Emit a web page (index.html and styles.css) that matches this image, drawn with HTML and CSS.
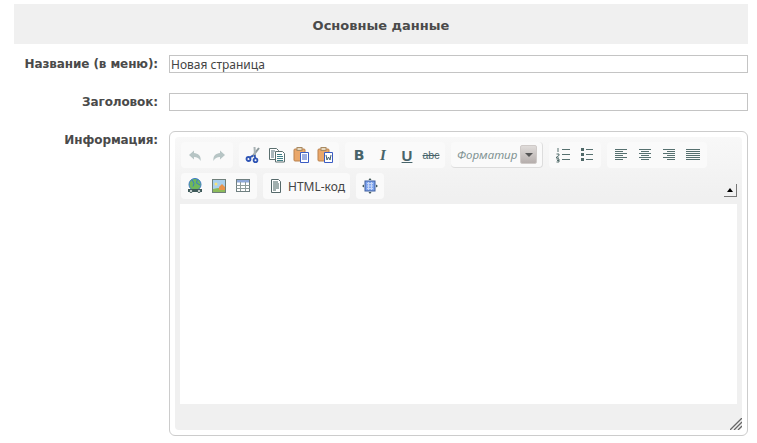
FILE: index.html
```html
<!DOCTYPE html>
<html lang="en">
<head>
    <meta charset="UTF-8">
    <title>Основные данные</title>
    <link rel="stylesheet" href="styles.css">
</head>
<body>
    <div class="container">
        <h2 class="section-title">Основные данные</h2>

        <div class="row">
            <label class="row-label">Название (в меню):</label>
            <input class="text-input" type="text" value="Новая страница">
        </div>
        <div class="row">
            <label class="row-label">Заголовок:</label>
            <input class="text-input" type="text">
        </div>
        <div class="row">
            <label class="row-label">Информация:</label>
            <div class="editor">
                <div class="editor-inner">
                    <div class="toolbar">
                        <div class="tb-group">
                            <span class="tb-btn"><svg width="16" height="16" viewBox="0 0 16 16"><path d="M7 3.500 2 8l5 4.500V10c3 0 5 1 6.500 4C14.500 9 11 6.200 7 6z" fill="#b7c5c5"/></svg></span>
                            <span class="tb-btn"><svg width="16" height="16" viewBox="0 0 16 16"><path d="M9 3.500 14 8l-5 4.500V10c-3 0-5 1-6.500 4C1.500 9 5 6.200 9 6z" fill="#b7c5c5"/></svg></span>
                        </div>
                        <div class="tb-group">
                            <span class="tb-btn"><svg width="16" height="16" viewBox="0 0 16 16"><path d="M14 1 7 10" stroke="#8d9a9c" stroke-width="2" fill="none"/><path d="M9.500 0 10 9" stroke="#a9b3b5" stroke-width="2" fill="none"/><path d="M8 8.500 4 11M9.500 8l1 4" stroke="#2f55b5" stroke-width="1.800" fill="none"/><circle cx="3.500" cy="12" r="2" fill="none" stroke="#2f55b5" stroke-width="1.800"/><circle cx="10.500" cy="13.200" r="1.900" fill="none" stroke="#2f55b5" stroke-width="1.800"/></svg></span>
                            <span class="tb-btn"><svg width="16" height="16" viewBox="0 0 16 16"><path d="M.5 1.500h7l2 2v9h-9z" fill="#fff" stroke="#5b6f6f"/><path d="M6.500 4.500h7l2 2v8.500h-9z" fill="#fff" stroke="#5b6f6f"/><path d="M2 4h4M2 6h3M2 8h3M2 10h3" stroke="#55707a"/><path d="M8 7.500h5M8 9.500h6M8 11.500h6M8 13.500h6" stroke="#3f7f86"/></svg></span>
                            <span class="tb-btn"><svg width="16" height="16" viewBox="0 0 16 16"><rect x="1" y="2" width="11" height="12" rx="1" fill="#eaa76a" stroke="#b9824f"/><rect x="4" y="0.500" width="5" height="3" fill="#e7d9c0" stroke="#a98a62"/><path d="M7.500 5.500h8v10h-8z" fill="#fff" stroke="#3a5cc4"/><path d="M9 8h5M9 10h5M9 12h5" stroke="#3a5cc4"/></svg></span>
                            <span class="tb-btn"><svg width="16" height="16" viewBox="0 0 16 16"><rect x="1" y="2" width="11" height="12" rx="1" fill="#eaa76a" stroke="#b9824f"/><rect x="4" y="0.500" width="5" height="3" fill="#e7d9c0" stroke="#a98a62"/><path d="M7.500 5.500h8v10h-8z" fill="#fff" stroke="#3a5cc4"/><path d="M9 8l1 5 1.500-3 1.500 3 1-5" stroke="#44606e" fill="none"/></svg></span>
                        </div>
                        <div class="tb-group">
                            <span class="tb-btn tb-bold">B</span>
                            <span class="tb-btn tb-italic">I</span>
                            <span class="tb-btn tb-under">U</span>
                            <span class="tb-btn tb-strike">abc</span>
                        </div>
                        <div class="tb-group tb-format">
                            <span class="format-text">Форматир</span>
                            <span class="format-arrow"></span>
                        </div>
                        <div class="tb-group">
                            <span class="tb-btn"><svg width="16" height="16" viewBox="0 0 16 16"><path d="M7 2.500h8M7 7.500h8M7 12.500h8" stroke="#56706f" fill="none"/><path d="M3 1v4M1.500 7H4v1.500L1.500 10v1H4M1.500 12H4v3H1.500M2 13.500h2" stroke="#44605f" stroke-width=".900" fill="none"/></svg></span>
                            <span class="tb-btn"><svg width="16" height="16" viewBox="0 0 16 16"><path d="M7 2.500h7M7 7.500h7M7 12.500h7" stroke="#56706f" fill="none"/><path d="M2 1h3v3H2zM2 6h3v3H2zM2 11h3v3H2z" fill="#4f6868"/></svg></span>
                        </div>
                        <div class="tb-group">
                            <span class="tb-btn"><svg width="16" height="16" viewBox="0 0 16 16"><path d="M2 2.500h12M2 4.500h8M2 6.500h12M2 8.500h8M2 10.500h12M2 12.500h8" stroke="#56706f"/></svg></span>
                            <span class="tb-btn"><svg width="16" height="16" viewBox="0 0 16 16"><path d="M2 2.500h12M4 4.500h8M2 6.500h12M4 8.500h8M2 10.500h12M4 12.500h8" stroke="#56706f"/></svg></span>
                            <span class="tb-btn"><svg width="16" height="16" viewBox="0 0 16 16"><path d="M2 2.500h12M6 4.500h8M2 6.500h12M6 8.500h8M2 10.500h12M6 12.500h8" stroke="#56706f"/></svg></span>
                            <span class="tb-btn"><svg width="16" height="16" viewBox="0 0 16 16"><path d="M1 2.500h14M1 4.500h14M1 6.500h14M1 8.500h14M1 10.500h14M1 12.500h14" stroke="#56706f"/></svg></span>
                        </div>
                    </div>
                    <div class="toolbar toolbar-second">
                        <div class="tb-group">
                            <span class="tb-btn"><svg width="16" height="16" viewBox="0 0 16 16"><circle cx="8" cy="6.500" r="6" fill="#6fb85a" stroke="#3a78c8"/><path d="M5 1.500l2 4-1 3M10.500 1l-1 4 3.500 2" stroke="#3a78c8" fill="none"/><path d="M1 11h14v3H1z" fill="#3f5a5a"/><circle cx="4" cy="13" r="1.500" fill="#fff" stroke="#3f5a5a"/><circle cx="12" cy="13" r="1.500" fill="#fff" stroke="#3f5a5a"/></svg></span>
                            <span class="tb-btn"><svg width="16" height="16" viewBox="0 0 16 16"><rect x="1.500" y="1.500" width="13" height="13" fill="#a9d0ee" stroke="#6f7f7a"/><path d="M2 14v-3l5-1 7 1v3z" fill="#8cbb5a"/><path d="M8 9l3-3 3 3v3H8z" fill="#e8924a"/><circle cx="5" cy="6" r="1.500" fill="#f5e27a"/></svg></span>
                            <span class="tb-btn"><svg width="16" height="16" viewBox="0 0 16 16"><rect x="1.500" y="1.500" width="13" height="12" fill="#fff" stroke="#6f7f80"/><path d="M2 2h12v2.500H2z" fill="#8fa8d8"/><path d="M1.500 7.500h13M1.500 10.500h13M5.500 4v9M10.500 4v9" stroke="#8f9c9c"/></svg></span>
                        </div>
                        <div class="tb-group">
                            <span class="tb-btn tb-wide"><svg width="16" height="16" viewBox="0 0 16 16"><path d="M3.500 1.500h7l2 2v11h-9z" fill="#fff" stroke="#55696a"/><path d="M5 4h5M5 6h6M5 8h6M5 10h6M5 12h3" stroke="#44605f"/></svg><span class="tb-label">HTML-код</span></span>
                        </div>
                        <div class="tb-group">
                            <span class="tb-btn"><svg width="16" height="16" viewBox="0 0 16 16"><rect x="3" y="3" width="10" height="10" fill="#7fa4ee" stroke="#3f5f9f"/><path d="M5 5.500h6M5 8h6M5 10.500h6M6.500 4v8M9.500 4v8" stroke="#c5d6f7"/><path d="M8 0 6.500 2h3zM8 16l-1.500-2h3zM0 8l2-1.500v3zM16 8l-2-1.500v3z" fill="#3f5656"/></svg></span>
                        </div>
                        <span class="collapse-btn"></span>
                    </div>
                    <div class="editor-area"></div>
                    <div class="statusbar">
                        <svg class="resize-grip" width="12" height="12" viewBox="0 0 12 12"><path d="M0 12 12 0M4 12l8-8M8 12l4-4" stroke="#666" stroke-width="1.300"/></svg>
                    </div>
                </div>
            </div>
        </div>
    </div>
</body>
</html>
```

FILE: styles.css
```css
html, body {
    margin: 0;
    padding: 0;
    background-color: #fff;
}

body {
    font-family: "DejaVu Sans", Verdana, sans-serif;
    font-size: 12px;
    color: #4a4a4a;
    overflow: hidden;
}

.container {
    padding: 4px 9px 0 14px;
}

.section-title {
    margin: 0 0 11px;
    height: 40px;
    line-height: 43px;
    text-align: center;
    font-size: 13px;
    font-weight: bold;
    color: #4a4a4a;
    background-color: #f0f0f0;
}

.row {
    display: flex;
    margin-bottom: 20px;
}

.row-label {
    width: 144px;
    margin-right: 11px;
    flex: none;
    text-align: right;
    font-weight: bold;
    font-size: 12px;
    letter-spacing: -0.1px;
    line-height: 18px;
}

.text-input {
    flex: 1;
    min-width: 0;
    height: 18px;
    box-sizing: border-box;
    margin: 0;
    padding: 0 1px;
    border: 1px solid #c4c4c4;
    background-color: #fff;
    font-family: "Noto Sans", sans-serif;
    font-size: 12px;
    color: #444;
    outline: none;
}

.editor {
    flex: 1;
    min-width: 0;
    box-sizing: border-box;
    height: 305px;
    padding: 5px;
    border: 1px solid #ccc;
    border-radius: 6px;
}

.editor-inner {
    display: flex;
    flex-direction: column;
    height: 100%;
    border-radius: 4px;
    background-color: #f0f0f0;
    background-image: linear-gradient(#f8f8f8, #f0f0f0 60px);
}

.toolbar {
    display: flex;
    gap: 6px;
    padding: 5px 6px 0;
}

.toolbar-second {
    align-items: flex-end;
    padding-right: 5px;
}

.tb-group {
    display: flex;
    align-items: center;
    height: 26px;
    padding: 0 2px;
    border-radius: 4px;
    background-color: #fafafa;
}

.tb-btn {
    display: flex;
    align-items: center;
    justify-content: center;
    width: 24px;
    height: 26px;
    color: #48646a;
}

.tb-bold, .tb-under {
    font-size: 14px;
    font-weight: bold;
}

.tb-italic {
    font-family: "Liberation Serif", serif;
    font-size: 15px;
    font-weight: bold;
    font-style: italic;
}

.tb-under {
    text-decoration: underline;
    font-family: "Liberation Sans", sans-serif;
    font-size: 15px;
}

.tb-strike {
    font-family: "Liberation Sans", sans-serif;
    font-size: 10.500px;
    text-decoration: line-through;
}

.tb-wide {
    width: 83px;
    justify-content: flex-start;
    padding-left: 3px;
    box-sizing: border-box;
    gap: 4px;
}

.tb-label {
    font-family: "Noto Sans", sans-serif;
    font-size: 12px;
    color: #444;
}

.tb-format {
    width: 92px;
    box-sizing: border-box;
    padding: 0 5px 0 4px;
    border-right: 1px solid #ddd;
    border-bottom: 1px solid #ddd;
    justify-content: space-between;
}

.format-text {
    padding-left: 2px;
    white-space: nowrap;
    font-family: "Noto Sans", sans-serif;
    font-size: 11.500px;
    font-style: italic;
    color: #829494;
}

.format-arrow {
    display: flex;
    align-items: center;
    justify-content: center;
    flex: none;
    width: 17px;
    height: 19px;
    border-radius: 2px;
    background-image: linear-gradient(#e0dcda, #b5aeac);
    border: 1px solid #cfcac8;
    box-sizing: border-box;
}

.format-arrow::after {
    content: "";
    border-style: solid;
    border-width: 4px 4px 0;
    border-color: #555 transparent transparent;
}

.collapse-btn {
    display: flex;
    align-items: center;
    justify-content: center;
    box-sizing: border-box;
    width: 13px;
    height: 13px;
    margin-left: auto;
    margin-bottom: 2px;
    border-right: 1px solid #777;
    border-bottom: 1px solid #777;
}

.collapse-btn::after {
    content: "";
    border-style: solid;
    border-width: 0 3px 4px;
    border-color: transparent transparent #000;
}

.editor-area {
    flex: 1;
    margin: 5px 5px 0 5px;
    background-color: #fff;
}

.statusbar {
    display: flex;
    justify-content: flex-end;
    align-items: flex-end;
    flex: none;
    height: 26px;
}

.resize-grip {
    display: block;
}
```
